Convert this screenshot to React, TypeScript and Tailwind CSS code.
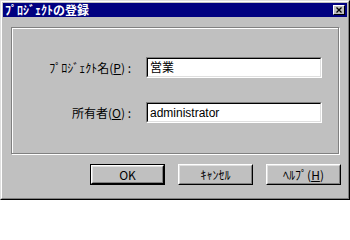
import React from 'react';

const raised =
  'border border-t-white border-l-white border-r-black border-b-black';

function Mnemonic({ ch }: { ch: string }) {
  return (
    <>
      (<span className="underline underline-offset-[1px]">{ch}</span>)
    </>
  );
}

function Button({ children, def }: { children: React.ReactNode; def?: boolean }) {
  return (
    <div className={def ? 'border border-black' : ''}>
      <div
        className={`${raised} ${def ? 'h-[19px] w-[73px]' : 'h-[21px] w-[75px]'}`}
      >
        <div className="flex h-full w-full items-center justify-center border border-t-[#dfdfdf] border-l-[#dfdfdf] border-r-[#808080] border-b-[#808080] text-[12px] leading-none text-black">
          {children}
        </div>
      </div>
    </div>
  );
}

function Field({ value }: { value: string }) {
  return (
    <div className="h-[21px] w-[176px] border border-t-[#808080] border-l-[#808080] border-r-white border-b-white">
      <div className="flex h-full w-full items-center border border-t-black border-l-black border-r-[#dfdfdf] border-b-[#dfdfdf] bg-white pl-[2px] font-['Liberation_Sans','Noto_Sans_CJK_JP',sans-serif] text-[12px] leading-none text-black">
        {value}
      </div>
    </div>
  );
}

export default function App() {
  return (
    <div className="flex h-[200px] w-[350px] flex-col border border-t-[#dfdfdf] border-l-[#dfdfdf] border-r-black border-b-black bg-[#c0c0c0] font-['Noto_Sans_CJK_JP',sans-serif]">
      <div className="flex flex-1 flex-col border border-t-white border-l-white border-r-[#808080] border-b-[#808080] p-px">
        {/* title bar */}
        <div className="flex h-[14px] shrink-0 items-center justify-between bg-[#000080] pl-[2px] pr-[2px]">
          <span className="text-[12px] font-bold leading-none text-white">ﾌﾟﾛｼﾞｪｸﾄの登録</span>
          <div className={`${raised} h-[10px] w-[12px] bg-[#c0c0c0]`}>
            <svg viewBox="0 0 10 8" className="h-full w-full">
              <path d="M2.5 1.5 L7.5 6.5 M7.5 1.5 L2.5 6.5" stroke="black" strokeWidth="1.3" />
            </svg>
          </div>
        </div>

        {/* group */}
        <div className="mx-[8px] mt-[10px] h-[127px] w-[328px] shrink-0 border border-[#808080] shadow-[inset_1px_1px_0_#fff,1px_1px_0_#fff]">
          <div className="flex flex-col gap-[24px] pt-[29px] text-[12px] leading-none text-black">
            <div className="flex items-center">
              <div className="w-[134px] pr-[15px] text-right">
                ﾌﾟﾛｼﾞｪｸﾄ名<Mnemonic ch="P" /> :
              </div>
              <Field value="営業" />
            </div>
            <div className="flex items-center">
              <div className="w-[134px] pr-[15px] text-right">
                所有者<Mnemonic ch="O" /> :
              </div>
              <Field value="administrator" />
            </div>
          </div>
        </div>

        {/* buttons */}
        <div className="mt-[10px] flex justify-end gap-[13px] pb-[12px] pr-[6px]">
          <Button def>OK</Button>
          <Button>ｷｬﾝｾﾙ</Button>
          <Button>
            ﾍﾙﾌﾟ<Mnemonic ch="H" />
          </Button>
        </div>
      </div>
    </div>
  );
}
